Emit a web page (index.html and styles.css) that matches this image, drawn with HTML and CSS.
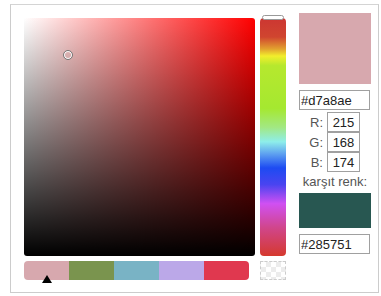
FILE: index.html
```html
<!DOCTYPE html>
<html>
<head>
    <title>Renk Seçici</title>
    <link rel="stylesheet" href="styles.css">
</head>
<body>
    <div class="picker">
        <div class="main">
            <div class="top-row">
                <div class="sat-box">
                    <div class="sat-cursor"></div>
                </div>
                <div class="hue-bar">
                    <div class="hue-handle"></div>
                </div>
            </div>
            <div class="bottom-row">
                <div class="palette">
                    <div class="swatch" style="background:#d7a8ae"></div>
                    <div class="swatch" style="background:#7a944e"></div>
                    <div class="swatch" style="background:#79b3c5"></div>
                    <div class="swatch" style="background:#bba8e8"></div>
                    <div class="swatch" style="background:#e0384f"></div>
                    <div class="marker"></div>
                </div>
                <div class="alpha"></div>
            </div>
        </div>
        <div class="side">
            <div class="preview" style="background:#d7a8ae"></div>
            <input class="hex" type="text" value="#d7a8ae">
            <div class="rgb-row"><label>R:</label><input type="text" value="215"></div>
            <div class="rgb-row"><label>G:</label><input type="text" value="168"></div>
            <div class="rgb-row"><label>B:</label><input type="text" value="174"></div>
            <div class="caption">karşıt renk:</div>
            <div class="opposite" style="background:#285751"></div>
            <input class="hex" type="text" value="#285751">
        </div>
    </div>
</body>
</html>
```

FILE: styles.css
```css
body {
    margin: 0;
    font-family: "Liberation Sans", Arial, sans-serif;
    font-size: 13px;
    color: #222;
    background: #fff;
}
.picker {
    margin: 4px 0 0 10px;
    width: 369px;
    height: 289px;
    box-sizing: border-box;
    border: 1px solid #ccc;
    border-top-color: #d4d4d4;
    padding: 8px 0 0 13px;
    display: flex;
}
.main {
    padding-top: 5px;
    width: 262px;
}
.top-row {
    display: flex;
    gap: 5px;
}
.sat-box {
    position: relative;
    width: 231px;
    height: 238px;
    border-radius: 3px;
    background: linear-gradient(to top, #000, rgba(0,0,0,0)),
                linear-gradient(to right, #fff, #f00);
}
.sat-cursor {
    position: absolute;
    left: 39px;
    top: 32px;
    width: 8px;
    height: 8px;
    border: 1px solid #777;
    border-radius: 50%;
    box-shadow: inset 0 0 0 1px #fff;
}
.hue-bar {
    position: relative;
    width: 26px;
    height: 238px;
    border-radius: 4px;
    background: linear-gradient(to bottom,
        #cc3632 0%, #d0452f 8%, #e2a12f 13%, #f2ee2c 16%, #b6e82e 20%,
        #a5e830 38%, #a2e884 46%, #8eeeea 52%, #5fa2f0 57%, #1d4bf2 63%,
        #4a44f0 70%, #d050f2 78%, #d0468c 88%, #d5392e 100%);
}
.hue-handle {
    position: absolute;
    left: 2px;
    top: -3px;
    width: 20px;
    height: 3px;
    background: #fff;
    border: 1px solid #999;
    border-radius: 3px;
}
.bottom-row {
    display: flex;
    gap: 11px;
    margin-top: 5px;
}
.palette {
    position: relative;
    display: flex;
    width: 225px;
    height: 19px;
    border-radius: 4px;
}
.swatch {
    flex: 1;
}
.swatch:first-child {
    border-radius: 4px 0 0 4px;
}
.swatch:nth-child(5) {
    border-radius: 0 4px 4px 0;
}
.marker {
    position: absolute;
    left: 18px;
    top: 14px;
    width: 0;
    height: 0;
    border-left: 5px solid transparent;
    border-right: 5px solid transparent;
    border-bottom: 8px solid #000;
}
.alpha {
    width: 26px;
    height: 19px;
    box-sizing: border-box;
    border: 1px dashed #ccc;
    background: repeating-conic-gradient(#ececec 0 25%, #fff 0 50%) 0 0 / 10px 10px;
}
.side {
    margin-left: 13px;
    width: 72px;
    display: flex;
    flex-direction: column;
}
.preview {
    height: 71px;
}
input {
    font-family: "Liberation Sans", Arial, sans-serif;
    font-size: 13px;
    color: #222;
    height: 20px;
    box-sizing: border-box;
    border: 1px solid #a0a0a0;
    padding: 0 1px;
    margin: 0;
    outline: none;
}
.hex {
    width: 71px;
    margin-top: 6px;
    margin-bottom: 2px;
}
.rgb-row {
    display: flex;
    justify-content: flex-end;
    align-items: center;
    gap: 4px;
    padding-right: 11px;
}
.rgb-row label {
    color: #555;
}
.rgb-row input {
    width: 33px;
    text-align: center;
}
.caption {
    color: #555;
    text-align: center;
    margin-top: 1px;
    line-height: 17px;
}
.opposite {
    margin-top: 3px;
    height: 35px;
}
```
